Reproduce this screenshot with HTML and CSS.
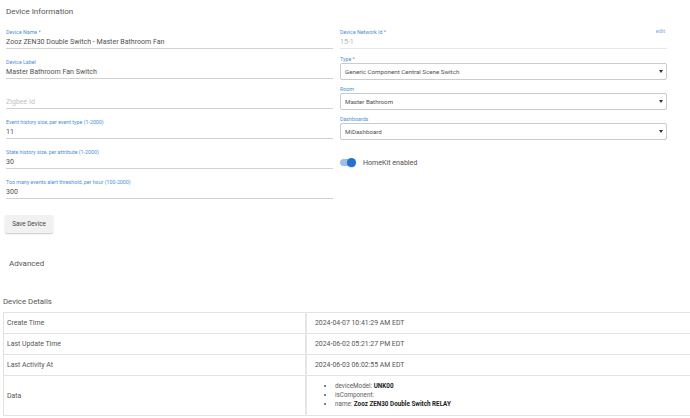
FILE: index.html
```html
<!DOCTYPE html>
<html>
<head>
<meta charset="utf-8">
<link rel="stylesheet" href="styles.css">
</head>
<body>
<div class="page">
  <h2 class="title">Device Information</h2>
  <div class="form">
    <div class="col">
      <div class="field"><div class="label">Device Name *</div><div class="value">Zooz ZEN30 Double Switch - Master Bathroom Fan</div></div>
      <div class="field"><div class="label">Device Label</div><div class="value">Master Bathroom Fan Switch</div></div>
      <div class="field"><div class="label"></div><div class="value placeholder">Zigbee Id</div></div>
      <div class="field"><div class="label">Event history size, per event type (1-2000)</div><div class="value">11</div></div>
      <div class="field"><div class="label">State history size, per attribute (1-2000)</div><div class="value">30</div></div>
      <div class="field"><div class="label">Too many events alert threshold, per hour (100-2000)</div><div class="value">300</div></div>
      <button class="btn">Save Device</button>
    </div>
    <div class="col">
      <div class="field field-ro"><div class="label label-row"><span>Device Network Id *</span><a class="edit">edit</a></div><div class="value readonly">15-1</div></div>
      <div class="sel-field"><div class="label">Type *</div><div class="select"><span>Generic Component Central Scene Switch</span><i class="caret"></i></div></div>
      <div class="sel-field"><div class="label">Room</div><div class="select"><span>Master Bathroom</span><i class="caret"></i></div></div>
      <div class="sel-field"><div class="label">Dashboards</div><div class="select"><span>MiDashboard</span><i class="caret"></i></div></div>
      <div class="toggle-row"><span class="switch"><span class="knob"></span></span><span class="toggle-text">HomeKit enabled</span></div>
    </div>
  </div>
  <div class="advanced">Advanced</div>
  <div class="details-title">Device Details</div>
  <table class="details">
    <tr><td class="k">Create Time</td><td class="v">2024-04-07 10:41:29 AM EDT</td></tr>
    <tr><td class="k">Last Update Time</td><td class="v">2024-06-02 05:21:27 PM EDT</td></tr>
    <tr><td class="k">Last Activity At</td><td class="v">2024-06-03 06:02:55 AM EDT</td></tr>
    <tr class="data-row"><td class="k">Data</td><td class="v">
      <ul class="data-list">
        <li>deviceModel: <b>UNK00</b></li>
        <li>isComponent:</li>
        <li>name: <b>Zooz ZEN30 Double Switch RELAY</b></li>
      </ul>
    </td></tr>
  </table>
</div>
</body>
</html>
```

FILE: styles.css
```css
html, body {
  margin: 0;
  padding: 0;
  background: #ffffff;
  overflow: hidden;
}
body {
  font-family: Roboto, "Liberation Sans", sans-serif;
  color: #555;
  width: 690px;
  height: 418px;
}
.page {
  width: 690px;
}
.title {
  margin: 0;
  padding: 5.5px 6px 0;
  font-size: 8px;
  line-height: 12px;
  font-weight: 400;
  color: #555;
}
.form {
  display: grid;
  grid-template-columns: 327px 327px;
  column-gap: 7px;
  padding-left: 6px;
  margin-top: 11.5px;
}
.col {
  display: flex;
  flex-direction: column;
  align-items: stretch;
}
.field {
  border-bottom: 1px solid #d2d2d2;
  margin-bottom: 10px;
}
.field-ro {
  border-bottom: 1px solid #e8e8e8;
  margin-bottom: 7px;
}
.label {
  font-size: 5.3px;
  line-height: 7px;
  height: 7px;
  color: #4d8fdb;
  white-space: nowrap;
}
.label-row {
  display: flex;
  justify-content: space-between;
  padding-right: 2px;
}
.edit {
  color: #7aa9e3;
  font-size: 5.5px;
  margin-top: -1px;
}
.value {
  font-size: 7.05px;
  line-height: 12px;
  height: 12px;
  color: #505050;
  white-space: nowrap;
}
.placeholder {
  color: #c2c2c2;
}
.readonly {
  color: #b5b5b5;
}
.btn {
  align-self: flex-start;
  margin-top: 6px;
  margin-left: -1px;
  width: 48px;
  height: 18px;
  padding: 0;
  border: none;
  border-radius: 2px;
  background: #f1f1f1;
  box-shadow: 0 1px 1.5px rgba(0,0,0,0.22);
  font-family: Roboto, "Liberation Sans", sans-serif;
  font-size: 6.3px;
  color: #444;
}
.sel-field {
  margin-bottom: 6px;
}
.select {
  height: 17px;
  box-sizing: border-box;
  border: 1px solid #cbcbcb;
  border-radius: 2px;
  display: flex;
  align-items: center;
  justify-content: space-between;
  padding: 0 3px 0 4px;
  font-size: 6.2px;
  color: #505050;
  white-space: nowrap;
}
.caret {
  width: 0;
  height: 0;
  border-left: 2.5px solid transparent;
  border-right: 2.5px solid transparent;
  border-top: 3px solid #333;
}
.toggle-row {
  display: flex;
  align-items: center;
  height: 16px;
  margin-top: 8px;
}
.switch {
  position: relative;
  width: 15px;
  height: 7px;
  border-radius: 4px;
  background: #9dc0ea;
}
.knob {
  position: absolute;
  right: -1px;
  top: -1px;
  width: 9px;
  height: 9px;
  border-radius: 50%;
  background: #2472d0;
  box-shadow: 0 0.5px 1px rgba(0,0,0,0.3);
}
.toggle-text {
  margin-left: 8px;
  font-size: 7.1px;
  color: #505050;
}
.advanced {
  margin-top: 25px;
  padding-left: 9px;
  font-size: 8px;
  line-height: 12px;
  color: #555;
}
.details-title {
  margin-top: 27px;
  padding-left: 3px;
  font-size: 7.8px;
  line-height: 10px;
  color: #555;
}
.details {
  margin-top: 5px;
  margin-left: 3px;
  width: 700px;
  border-collapse: collapse;
}
.details td {
  border: 1px solid #e3e3e3;
  height: 20px;
  padding: 0 0 0 4px;
  font-size: 6.9px;
  color: #555;
  vertical-align: middle;
}
.details td.k {
  width: 298px;
  padding-left: 3px;
}
.details td.v {
  border-left: 2px solid #e6e6e6;
  padding-left: 8px;
}
.data-row td {
  height: 39px;
}
.data-list {
  margin: 0;
  padding-left: 20px;
  font-size: 6.3px;
  line-height: 9px;
  color: #5a5a5a;
}
.data-list b {
  color: #222;
}
```
